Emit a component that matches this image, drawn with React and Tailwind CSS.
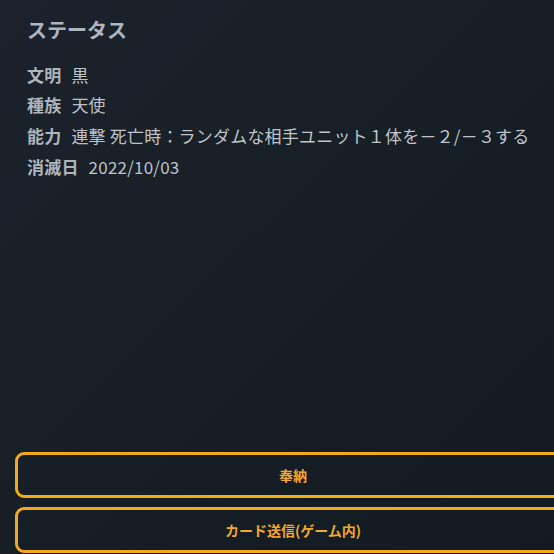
const rows = [
  { label: '文明', value: '黒' },
  { label: '種族', value: '天使' },
  { label: '能力', value: '連撃 死亡時：ランダムな相手ユニット１体を－２/－３する' },
  { label: '消滅日', value: '2022/10/03' },
];

const App = () => {
  return (
    <div
      className="h-[554px] w-[554px] overflow-hidden flex flex-col bg-gradient-to-br from-[#1b222b] to-[#121b21]"
      style={{ fontFamily: '"Noto Sans CJK JP", "Noto Sans", sans-serif' }}
    >
      <div className="px-[27px] pt-[16px]">
        <h2 className="text-[20px] leading-[28px] font-bold text-[#aeb5bd]">ステータス</h2>
        <div className="mt-[15px] flex flex-col">
          {rows.map(row => (
            <div key={row.label} className="flex items-center gap-[10px] h-[30.7px] text-[17px] tracking-[0.2px] whitespace-nowrap">
              <span className="font-bold text-[#aeb5bd]">{row.label}</span>
              <span className="text-[#bfc3c8]">{row.value}</span>
            </div>
          ))}
        </div>
      </div>

      <div className="mt-auto flex flex-col gap-[9px] pl-[15px] pb-[1px]">
        <button className="w-[556px] h-[46px] shrink-0 rounded-[9px] border-[3px] border-[#f4a91a] text-[14px] font-bold text-[#f2a928]">
          奉納
        </button>
        <button className="w-[556px] h-[46px] shrink-0 rounded-[9px] border-[3px] border-[#f4a91a] text-[14px] font-bold text-[#f2a928]">
          カード送信(ゲーム内)
        </button>
      </div>
    </div>
  );
};

export default App;
